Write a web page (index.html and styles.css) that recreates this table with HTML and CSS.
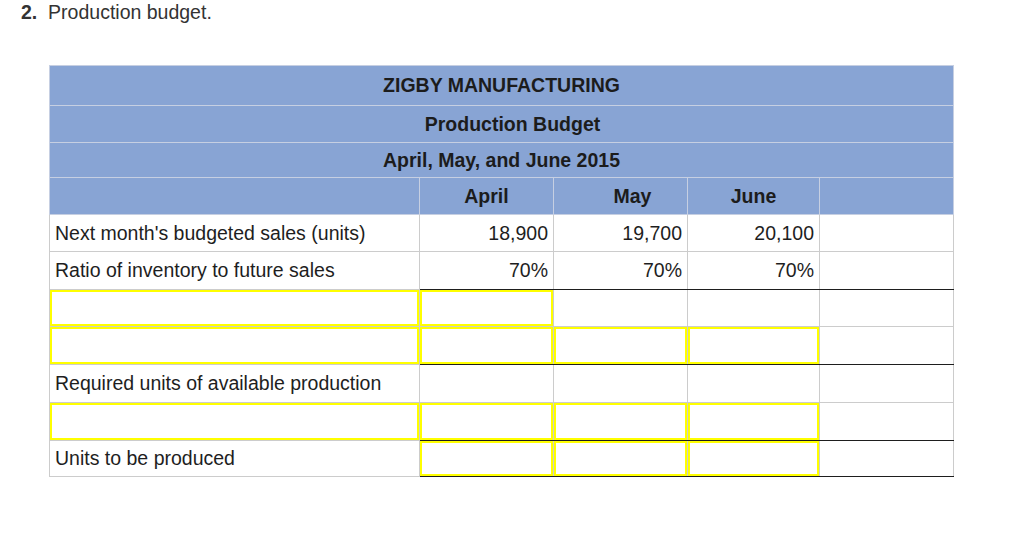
FILE: index.html
```html
<!DOCTYPE html>
<html>
<head>
<meta charset="utf-8">
<link rel="stylesheet" href="styles.css">
</head>
<body>
<div class="page">
  <h2 class="title"><b>2.</b>&nbsp;&nbsp;Production budget.</h2>
  <table class="budget">
    <colgroup>
      <col class="c-label">
      <col class="c-m1">
      <col class="c-m2">
      <col class="c-m3">
      <col class="c-extra">
    </colgroup>
    <tr class="h h1"><th colspan="5">ZIGBY MANUFACTURING</th></tr>
    <tr class="h h2"><th colspan="5" class="shift">Production Budget</th></tr>
    <tr class="h h3"><th colspan="5">April, May, and June 2015</th></tr>
    <tr class="h h4"><th></th><th>April</th><th class="may">May</th><th>June</th><th></th></tr>
    <tr class="r r37"><td class="lbl">Next month's budgeted sales (units)</td><td class="num">18,900</td><td class="num">19,700</td><td class="num">20,100</td><td></td></tr>
    <tr class="r r38"><td class="lbl">Ratio of inventory to future sales</td><td class="num tot">70%</td><td class="num tot">70%</td><td class="num tot">70%</td><td class="tot"></td></tr>
    <tr class="r r37"><td class="lbl y"></td><td class="y"></td><td></td><td></td><td></td></tr>
    <tr class="r r38"><td class="lbl y"></td><td class="y tot"></td><td class="y tot"></td><td class="y tot"></td><td class="tot"></td></tr>
    <tr class="r r38"><td class="lbl">Required units of available production</td><td></td><td></td><td></td><td></td></tr>
    <tr class="r r38"><td class="lbl y"></td><td class="y tot"></td><td class="y tot"></td><td class="y tot"></td><td class="tot"></td></tr>
    <tr class="r r36"><td class="lbl">Units to be produced</td><td class="y tot"></td><td class="y tot"></td><td class="y tot"></td><td class="tot"></td></tr>
  </table>
</div>
</body>
</html>
```

FILE: styles.css
```css
html, body {
  margin: 0;
  padding: 0;
  background: #ffffff;
}

.page {
  font-family: "Liberation Sans", Arial, Helvetica, sans-serif;
  color: #1e1e1e;
}

.title {
  margin: 0;
  padding-left: 21px;
  font-size: 19.5px;
  line-height: 24px;
  font-weight: normal;
  color: #333333;
}

.title b {
  font-weight: bold;
}

.budget {
  margin-top: 41px;
  margin-left: 49px;
  border-collapse: collapse;
  table-layout: fixed;
  width: 904px;
  font-size: 19.5px;
}

.c-label { width: 370px; }
.c-m1 { width: 134px; }
.c-m2 { width: 134px; }
.c-m3 { width: 132px; }
.c-extra { width: 134px; }

.budget th,
.budget td {
  padding: 0 5px;
  vertical-align: middle;
  border: 1px solid #cccccc;
  white-space: nowrap;
}

.budget .h th {
  background: #88a4d4;
  color: #1c1c1c;
  font-weight: bold;
  text-align: center;
  border-color: #c6cfe2;
}

.h1 th { height: 39px; }
.h2 th { height: 36px; }
.h3 th { height: 34px; }
.h4 th { height: 36px; }

.budget th.shift { padding-left: 27px; }
.budget th.may { padding-left: 29px; }

.r37 td { height: 36px; }
.r38 td { height: 37px; }
.r36 td { height: 35px; }

.budget td.num {
  text-align: right;
}

.budget td.lbl {
  padding-left: 5px;
}

.budget td.tot {
  border-bottom: 1px solid #1e1e1e;
}

.budget td.y {
  box-shadow: inset 0 0 0 2px #ffff00;
}
```
